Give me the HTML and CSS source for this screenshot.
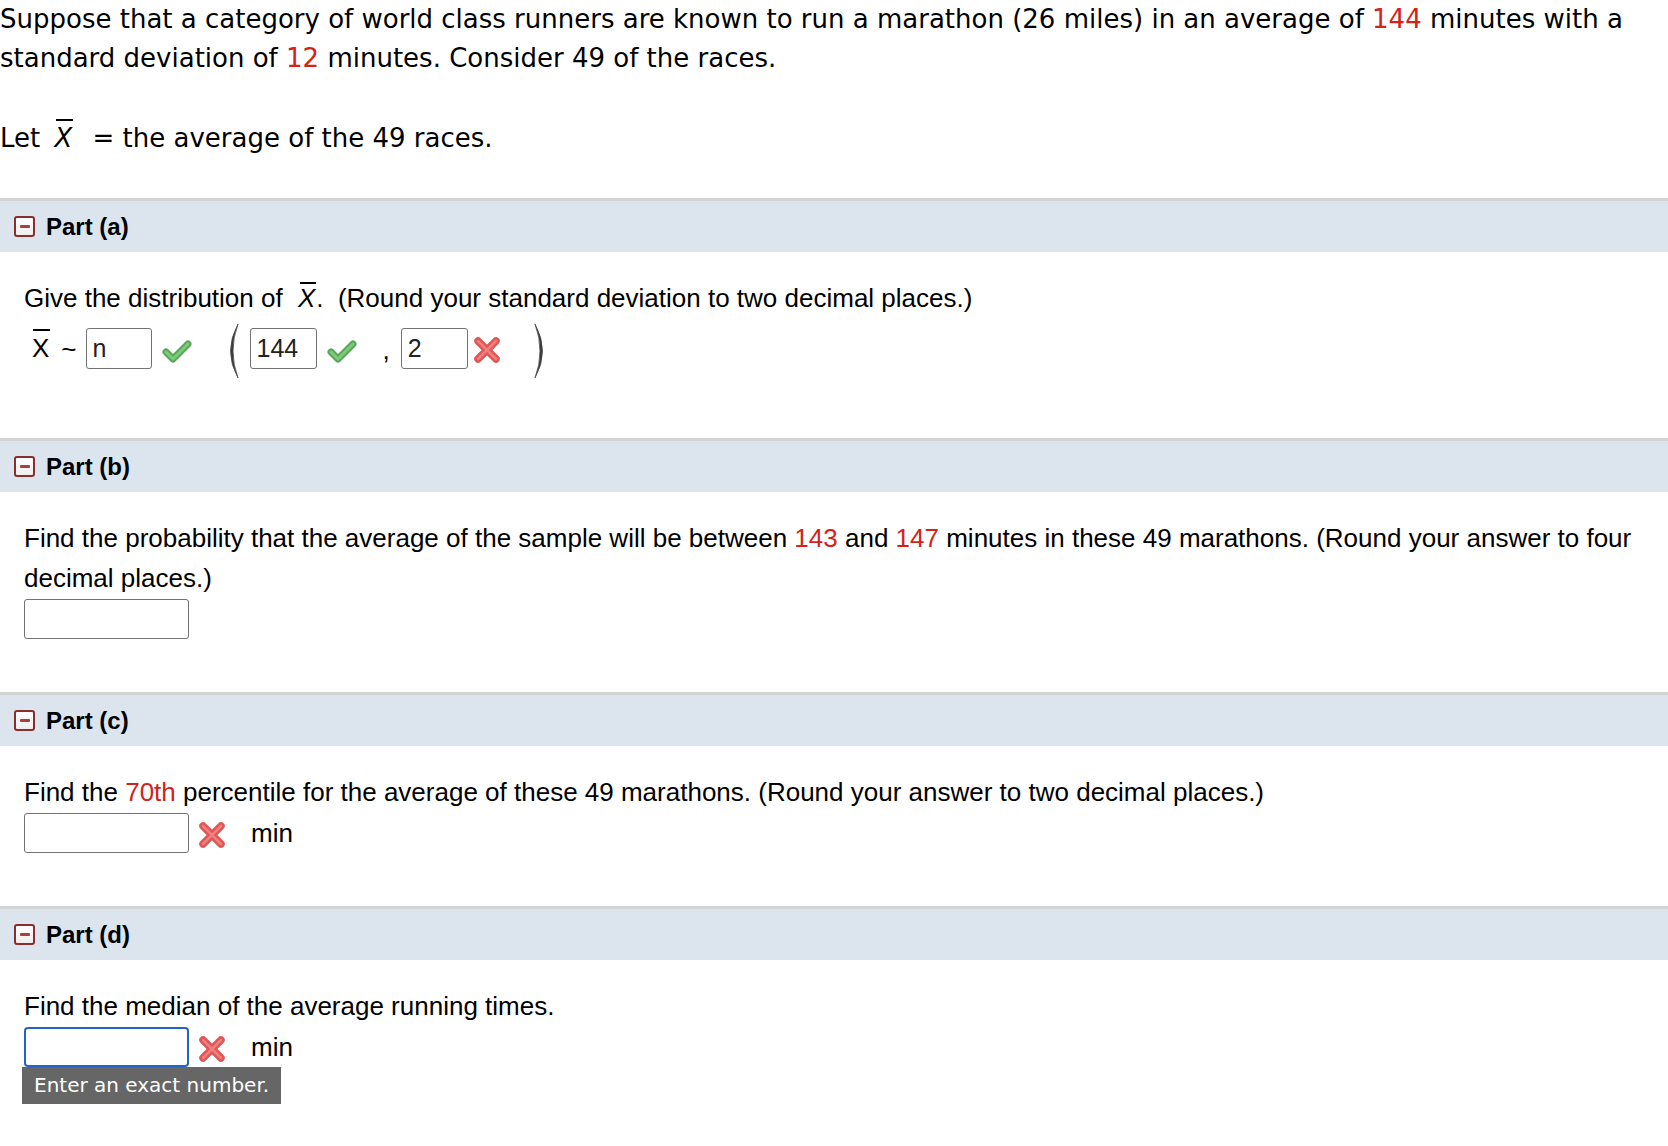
FILE: index.html
```html
<!DOCTYPE html>
<html>
<head>
<meta charset="utf-8">
<link rel="stylesheet" href="styles.css">
</head>
<body>
<div class="intro">
  <p class="intro-p">Suppose that a category of world class runners are known to run a marathon (26 miles) in an average of <span class="red">144</span> minutes with a standard deviation of <span class="red">12</span> minutes. Consider 49 of the races.</p>
  <p class="intro-let">Let <span class="xbar xbar-intro">X</span> = the average of the 49 races.</p>
</div>

<section class="part">
  <div class="part-head"><span class="collapse"><span class="minus"></span></span>Part (a)</div>
  <div class="part-body body-a">
    <p class="q">Give the distribution of <span class="xbar xbar-q">X</span>.&nbsp; (Round your standard deviation to two decimal places.)</p>
    <div class="dist-row">
      <span class="xbar xbar-row">X</span>
      <span class="tilde">~</span>
      <span class="box box-n">n</span>
      <svg class="check" viewBox="0 0 30 24" width="30" height="24"><path d="M4 13 L11 20 L26 5" fill="none" stroke="#58a858" stroke-width="7" stroke-linecap="round" stroke-linejoin="round"/><path d="M4 13 L11 20 L26 5" fill="none" stroke="#7ccb7c" stroke-width="3" stroke-linecap="round" stroke-linejoin="round"/></svg>
      <svg class="paren paren-l" viewBox="0 0 14 56" width="14" height="56"><path d="M13 1 Q-2 28 13 55 Q3 28 13 1 Z" fill="#3a3a3a" stroke="#4a4a4a" stroke-width="0.8"/></svg>
      <span class="box box-mu">144</span>
      <svg class="check" viewBox="0 0 30 24" width="30" height="24"><path d="M4 13 L11 20 L26 5" fill="none" stroke="#58a858" stroke-width="7" stroke-linecap="round" stroke-linejoin="round"/><path d="M4 13 L11 20 L26 5" fill="none" stroke="#7ccb7c" stroke-width="3" stroke-linecap="round" stroke-linejoin="round"/></svg>
      <span class="comma">,</span>
      <span class="box box-sd">2</span>
      <svg class="cross" viewBox="0 0 30 30" width="30" height="30"><path d="M6 6 L24 24 M24 6 L6 24" fill="none" stroke="#e05555" stroke-width="7.5" stroke-linecap="round"/><path d="M6 6 L24 24 M24 6 L6 24" fill="none" stroke="#f07f7f" stroke-width="2.5" stroke-linecap="round"/></svg>
      <svg class="paren paren-r" viewBox="0 0 14 56" width="14" height="56"><path d="M1 1 Q16 28 1 55 Q11 28 1 1 Z" fill="#3a3a3a" stroke="#4a4a4a" stroke-width="0.8"/></svg>
    </div>
  </div>
</section>

<section class="part">
  <div class="part-head"><span class="collapse"><span class="minus"></span></span>Part (b)</div>
  <div class="part-body">
    <p class="q">Find the probability that the average of the sample will be between <span class="red">143</span> and <span class="red">147</span> minutes in these 49 marathons. (Round your answer to four decimal places.)</p>
    <div class="answer-row"><span class="box box-wide"></span></div>
  </div>
</section>

<section class="part">
  <div class="part-head"><span class="collapse"><span class="minus"></span></span>Part (c)</div>
  <div class="part-body">
    <p class="q">Find the <span class="red">70th</span> percentile for the average of these 49 marathons. (Round your answer to two decimal places.)</p>
    <div class="answer-row">
      <span class="box box-wide"></span>
      <svg class="cross cross-ans" viewBox="0 0 30 30" width="30" height="30"><path d="M6 6 L24 24 M24 6 L6 24" fill="none" stroke="#e05555" stroke-width="7.5" stroke-linecap="round"/><path d="M6 6 L24 24 M24 6 L6 24" fill="none" stroke="#f07f7f" stroke-width="2.5" stroke-linecap="round"/></svg>
      <span class="unit">min</span>
    </div>
  </div>
</section>

<section class="part">
  <div class="part-head"><span class="collapse"><span class="minus"></span></span>Part (d)</div>
  <div class="part-body body-d">
    <p class="q">Find the median of the average running times.</p>
    <div class="answer-row">
      <span class="box box-wide box-focus"></span>
      <svg class="cross cross-ans" viewBox="0 0 30 30" width="30" height="30"><path d="M6 6 L24 24 M24 6 L6 24" fill="none" stroke="#e05555" stroke-width="7.5" stroke-linecap="round"/><path d="M6 6 L24 24 M24 6 L6 24" fill="none" stroke="#f07f7f" stroke-width="2.5" stroke-linecap="round"/></svg>
      <span class="unit">min</span>
      <div class="tooltip">Enter an exact number.</div>
    </div>
  </div>
</section>
</body>
</html>
```

FILE: styles.css
```css
html, body {
  margin: 0;
  padding: 0;
  background: #fff;
  color: #000;
}

.intro {
  font-family: "DejaVu Sans", Verdana, sans-serif;
  font-size: 26px;
  line-height: 39px;
}

.intro-p {
  margin: 0;
}

.intro-let {
  margin: 41px 0 0 0;
}

.red {
  color: #d2231b;
}

.xbar {
  position: relative;
  display: inline-block;
  font-style: italic;
}

.xbar::before {
  content: "";
  position: absolute;
  height: 2px;
  background: #000;
}

.xbar-intro {
  margin: 0 12px 0 6px;
}

.xbar-intro::before {
  left: 2px;
  right: -1px;
  top: 0;
}

.part {
  margin-top: 40px;
  font-family: "Liberation Sans", Arial, sans-serif;
  font-size: 26px;
}

.part + .part {
  margin-top: 0;
}

.part-head {
  display: flex;
  align-items: center;
  height: 51px;
  border-top: 3px solid #d3d3d3;
  background: #dce5ee;
  font-weight: bold;
  font-size: 24px;
  padding-left: 14px;
}

.collapse {
  box-sizing: border-box;
  display: flex;
  align-items: center;
  justify-content: center;
  width: 21px;
  height: 21px;
  border: 2px solid #8c2d2d;
  border-radius: 3px;
  background: linear-gradient(#ffffff, #eeeeee);
  margin-right: 11px;
}

.minus {
  display: block;
  width: 10px;
  height: 3px;
  border-radius: 1px;
  background: #a8403f;
}

.part-body {
  padding: 26px 24px 53px 24px;
}

.body-a {
  padding-bottom: 60px;
}

.body-d {
  padding-bottom: 60px;
}

.q {
  margin: 0;
  line-height: 40px;
}

.xbar-q {
  margin: 0 1px 0 8px;
}

.xbar-q::before {
  left: 2px;
  right: -1px;
  top: 4px;
}

.dist-row {
  display: flex;
  align-items: center;
  height: 60px;
  margin-top: 0;
  padding-left: 8px;
}

.xbar-row {
  font-style: normal;
  line-height: 28px;
}

.xbar-row::before {
  left: 1px;
  right: -1px;
  top: -5px;
}

.tilde {
  margin-left: 12px;
  font-size: 26px;
  margin-top: 2px;
}

.box {
  box-sizing: border-box;
  display: inline-flex;
  align-items: center;
  height: 41px;
  border: 1.5px solid #737373;
  border-radius: 3px;
  background: #fff;
  color: #222;
  padding-left: 6px;
  font-size: 25px;
}

.box-n {
  width: 66px;
  margin-left: 9px;
}

.check {
  margin-left: 10px;
  margin-top: 6px;
}

.paren-l {
  margin-left: 33px;
  margin-top: 6px;
}

.box-mu {
  width: 67px;
  margin-left: 11px;
}

.comma {
  margin-left: 26px;
  margin-top: 4px;
}

.box-sd {
  width: 67px;
  margin-left: 11px;
}

.cross {
  margin-left: 4px;
  margin-top: 3px;
}

.paren-r {
  margin-left: 32px;
  margin-top: 6px;
}

.answer-row {
  position: relative;
  display: flex;
  align-items: center;
  margin-top: 1px;
}

.box-wide {
  width: 165px;
  height: 40px;
}

.box-focus {
  border: 2.5px solid #2463c6;
  border-radius: 4px;
}

.cross-ans {
  margin-left: 8px;
}

.unit {
  margin-left: 24px;
}

.tooltip {
  position: absolute;
  left: -2px;
  top: 40px;
  background: #666;
  color: #fff;
  font-family: "DejaVu Sans", Verdana, sans-serif;
  font-size: 20px;
  line-height: 37px;
  padding: 0 12px;
  white-space: nowrap;
}
```
